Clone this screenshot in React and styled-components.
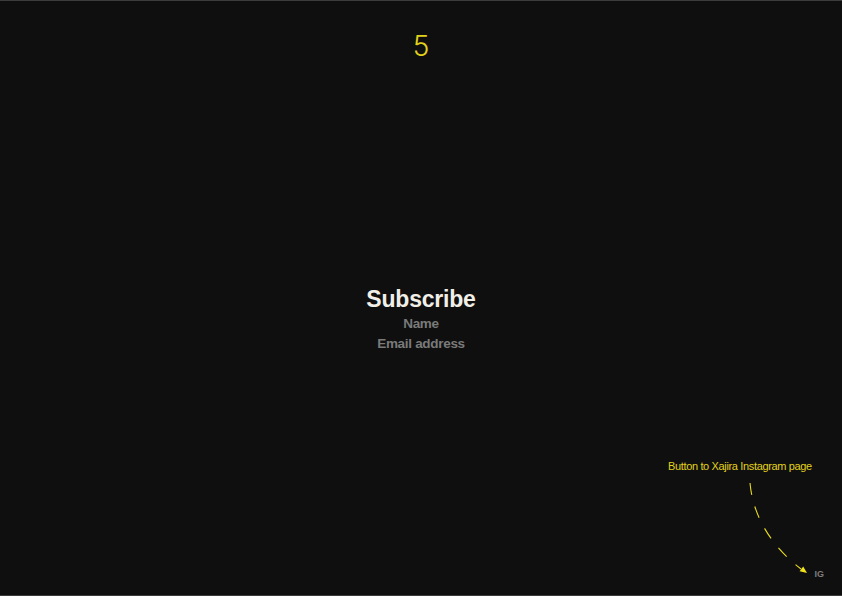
import styled, { createGlobalStyle } from "styled-components";

const GlobalStyle = createGlobalStyle`
  html, body {
    margin: 0;
    padding: 0;
    background: #0f0f0f;
  }
  body {
    font-family: "Liberation Sans", Arial, sans-serif;
  }
`;

export default function App() {
  return (
    <>
      <GlobalStyle />
      <Frame>
        <PageNumber>5</PageNumber>
        <Main>
          <Title>Subscribe</Title>
          <Field>Name</Field>
          <Field>Email address</Field>
        </Main>
        <Footer>
          <IgButton>IG</IgButton>
        </Footer>
        <Note>
          <NoteText>Button to Xajira Instagram page</NoteText>
          <Arrow width="70" height="100" viewBox="0 0 70 100">
            <path
              d="M1 2 C 4 35, 22 65, 52 88"
              fill="none"
              stroke="#e8dc1f"
              strokeWidth="1.1"
              strokeDasharray="12 12"
            />
            <polygon points="58,92 50.6,90.2 54.2,85.4" fill="#f0e21c" />
          </Arrow>
        </Note>
      </Frame>
    </>
  );
}

const Frame = styled.div`
  position: relative;
  box-sizing: border-box;
  height: 596px;
  border-top: 1px solid #3c3c3c;
  border-bottom: 1px solid #3c3c3c;
  background: #0f0f0f;
  display: grid;
  grid-template-rows: auto 1fr auto;
`;

const PageNumber = styled.div`
  padding-top: 29px;
  text-align: center;
  color: #e2d21a;
  font-family: Inter, "Noto Sans", sans-serif;
  font-weight: 300;
  font-size: 28px;
  line-height: 32px;
`;

const Main = styled.main`
  display: flex;
  flex-direction: column;
  align-items: center;
  padding-top: 223px;
`;

const Title = styled.h1`
  margin: 0 0 1px;
  color: #f1efe7;
  font-family: "Liberation Sans", Arial, sans-serif;
  font-weight: 700;
  font-size: 23px;
  line-height: 28px;
  letter-spacing: -0.2px;
`;

const Field = styled.div`
  color: #7a7a7a;
  font-weight: 700;
  font-size: 13.5px;
  line-height: 20px;
  letter-spacing: -0.3px;
`;

const Footer = styled.footer`
  display: flex;
  justify-content: flex-end;
  padding: 0 18px 16px 0;
`;

const IgButton = styled.span`
  color: #7d7d7d;
  font-weight: 700;
  font-size: 9px;
  line-height: 10px;
`;

const Note = styled.div`
  position: absolute;
  left: 668px;
  top: 458px;
  display: flex;
  flex-direction: column;
`;

const NoteText = styled.span`
  color: #e2d21a;
  font-family: "Liberation Sans", Arial, sans-serif;
  font-weight: 300;
  font-size: 11px;
  line-height: 14px;
  letter-spacing: -0.35px;
`;

const Arrow = styled.svg`
  margin: 8px 0 0 81px;
`;
